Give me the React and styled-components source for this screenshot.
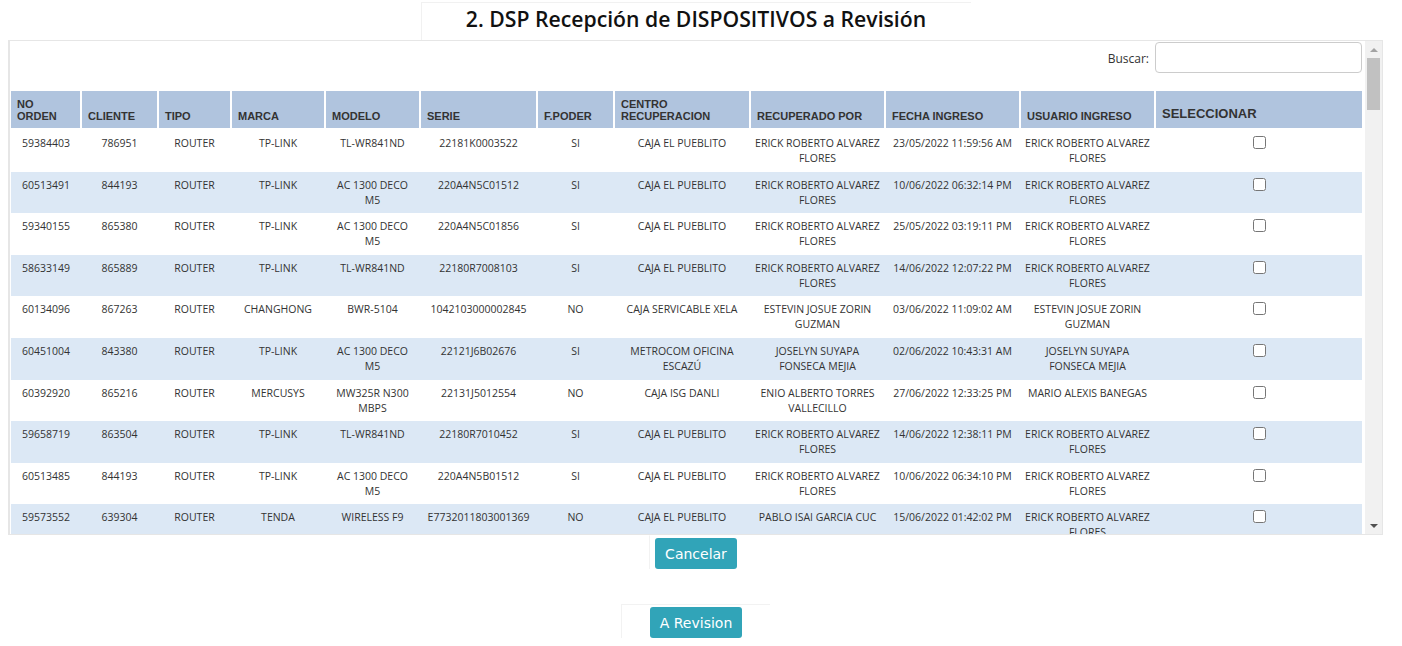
import React from 'react';
import styled, { createGlobalStyle } from 'styled-components';

const GlobalStyle = createGlobalStyle`
  html, body {
    margin: 0;
    padding: 0;
    background: #fff;
  }
  body {
    font-family: "Open Sans", "Liberation Sans", sans-serif;
    color: #333;
  }
`;

const Page = styled.div`
  padding: 0 19px 0 8px;
`;

const TitleBox = styled.div`
  width: 550px;
  height: 38px;
  margin: 2px auto 0;
  padding-bottom: 5px;
  border-top: 1px solid #f1f1f1;
  border-left: 1px solid #f1f1f1;
  box-sizing: border-box;
  display: flex;
  align-items: center;
  justify-content: center;
`;

const Title = styled.h2`
  margin: 0;
  font-size: 21.2px;
  line-height: 28px;
  font-weight: 600;
  color: #111;
`;

const Panel = styled.div`
  display: flex;
  height: 493px;
  border: 1px solid #e6e6e6;
  border-left-width: 2px;
  background: #fff;
`;

const Scroller = styled.div`
  flex: 1;
  overflow: hidden;
  padding: 0 3px 0 1px;
`;

const ScrollTrack = styled.div`
  width: 17px;
  flex: none;
  background: #f1f1f1;
  display: flex;
  flex-direction: column;
  align-items: center;
`;

const ScrollArrow = styled.div`
  height: 17px;
  width: 17px;
  display: flex;
  align-items: center;
  justify-content: center;

  &::before {
    content: '';
    width: 0;
    height: 0;
    border-left: 4px solid transparent;
    border-right: 4px solid transparent;
    ${(p) =>
      p.$down
        ? 'border-top: 4px solid #505050;'
        : 'border-bottom: 4px solid #a3a3a3;'}
  }
`;

const ScrollThumb = styled.div`
  width: 13px;
  height: 52px;
  background: #c1c1c1;
`;

const ScrollSpace = styled.div`
  flex: 1;
`;

const SearchBar = styled.div`
  display: flex;
  justify-content: flex-end;
  align-items: flex-start;
  gap: 6px;
  padding-top: 1px;
  height: 49px;
`;

const SearchLabel = styled.label`
  font-size: 12px;
  line-height: 33px;
  color: #333;
`;

const SearchInput = styled.input`
  width: 207px;
  height: 31px;
  box-sizing: border-box;
  border: 1px solid #ccc;
  border-radius: 4px;
  padding: 4px 8px;
  font-size: 12px;
  outline: none;
`;

const Table = styled.table`
  width: 1351px;
  table-layout: fixed;
  border-collapse: collapse;
  border-spacing: 0;
`;

const Th = styled.th`
  background: #b0c4de;
  font-family: "Liberation Sans", Arial, sans-serif;
  font-size: ${(p) => (p.$big ? '13px' : '11px')};
  line-height: ${(p) => (p.$big ? '14px' : '12px')};
  font-weight: bold;
  color: #333;
  text-align: left;
  vertical-align: bottom;
  white-space: pre-line;
  padding: 7px 5px ${(p) => (p.$big ? '7px' : '6px')} 6px;
  height: 37px;
  box-sizing: border-box;
  border-right: ${(p) => (p.$last ? '0' : '2px solid #fff')};
  border-bottom: 2px solid #fff;
`;

const Tr = styled.tr`
  background: ${(p) => (p.$alt ? '#dce8f5' : '#fff')};
`;

const Td = styled.td`
  font-size: 10.5px;
  line-height: 15px;
  color: #333;
  text-align: center;
  vertical-align: top;
  padding: 6px 3px 5.6px;
  white-space: pre-line;
`;

const Check = styled.input`
  width: 13px;
  height: 13px;
  margin: 0 0 0 1px;
  vertical-align: top;
`;

const Actions = styled.div`
  display: flex;
  flex-direction: column;
  align-items: center;
`;

const ButtonCell = styled.div`
  width: ${(p) => p.$w}px;
  margin-top: ${(p) => p.$mt}px;
  padding-top: 2px;
  display: flex;
  justify-content: center;
  border-left: 1px solid #f2f2f2;
  border-top: 1px solid ${(p) => (p.$top ? '#f2f2f2' : 'transparent')};
  box-sizing: border-box;
`;

const Button = styled.button`
  background: #31a4b8;
  color: #fff;
  border: none;
  border-radius: 3px;
  height: 31px;
  padding: 0 10px;
  font-family: "DejaVu Sans", Verdana, sans-serif;
  font-size: 14px;
  cursor: pointer;
`;

const columns = [
  { label: 'NO\nORDEN', w: 70 },
  { label: 'CLIENTE', w: 77 },
  { label: 'TIPO', w: 73 },
  { label: 'MARCA', w: 94 },
  { label: 'MODELO', w: 95 },
  { label: 'SERIE', w: 117 },
  { label: 'F.PODER', w: 77 },
  { label: 'CENTRO\nRECUPERACION', w: 136 },
  { label: 'RECUPERADO POR', w: 135 },
  { label: 'FECHA INGRESO', w: 135 },
  { label: 'USUARIO INGRESO', w: 135 },
  { label: 'SELECCIONAR', w: 207 },
];

const ERICK = 'ERICK ROBERTO ALVAREZ\nFLORES';

const rows = [
  ['59384403', '786951', 'ROUTER', 'TP-LINK', 'TL-WR841ND', '22181K0003522', 'SI', 'CAJA EL PUEBLITO', ERICK, '23/05/2022 11:59:56 AM', ERICK],
  ['60513491', '844193', 'ROUTER', 'TP-LINK', 'AC 1300 DECO\nM5', '220A4N5C01512', 'SI', 'CAJA EL PUEBLITO', ERICK, '10/06/2022 06:32:14 PM', ERICK],
  ['59340155', '865380', 'ROUTER', 'TP-LINK', 'AC 1300 DECO\nM5', '220A4N5C01856', 'SI', 'CAJA EL PUEBLITO', ERICK, '25/05/2022 03:19:11 PM', ERICK],
  ['58633149', '865889', 'ROUTER', 'TP-LINK', 'TL-WR841ND', '22180R7008103', 'SI', 'CAJA EL PUEBLITO', ERICK, '14/06/2022 12:07:22 PM', ERICK],
  ['60134096', '867263', 'ROUTER', 'CHANGHONG', 'BWR-5104', '1042103000002845', 'NO', 'CAJA SERVICABLE XELA', 'ESTEVIN JOSUE ZORIN\nGUZMAN', '03/06/2022 11:09:02 AM', 'ESTEVIN JOSUE ZORIN\nGUZMAN'],
  ['60451004', '843380', 'ROUTER', 'TP-LINK', 'AC 1300 DECO\nM5', '22121J6B02676', 'SI', 'METROCOM OFICINA\nESCAZÚ', 'JOSELYN SUYAPA\nFONSECA MEJIA', '02/06/2022 10:43:31 AM', 'JOSELYN SUYAPA\nFONSECA MEJIA'],
  ['60392920', '865216', 'ROUTER', 'MERCUSYS', 'MW325R N300\nMBPS', '22131J5012554', 'NO', 'CAJA ISG DANLI', 'ENIO ALBERTO TORRES\nVALLECILLO', '27/06/2022 12:33:25 PM', 'MARIO ALEXIS BANEGAS'],
  ['59658719', '863504', 'ROUTER', 'TP-LINK', 'TL-WR841ND', '22180R7010452', 'SI', 'CAJA EL PUEBLITO', ERICK, '14/06/2022 12:38:11 PM', ERICK],
  ['60513485', '844193', 'ROUTER', 'TP-LINK', 'AC 1300 DECO\nM5', '220A4N5B01512', 'SI', 'CAJA EL PUEBLITO', ERICK, '10/06/2022 06:34:10 PM', ERICK],
  ['59573552', '639304', 'ROUTER', 'TENDA', 'WIRELESS F9', 'E7732011803001369', 'NO', 'CAJA EL PUEBLITO', 'PABLO ISAI GARCIA CUC', '15/06/2022 01:42:02 PM', ERICK],
];

const App = () => {
  return (
    <Page>
      <GlobalStyle />
      <TitleBox>
        <Title>2. DSP Recepción de DISPOSITIVOS a Revisión</Title>
      </TitleBox>

      <Panel>
        <Scroller>
          <SearchBar>
            <SearchLabel>Buscar:</SearchLabel>
            <SearchInput type="search" />
          </SearchBar>

          <Table>
            <colgroup>
              {columns.map((c) => (
                <col key={c.label} style={{ width: c.w }} />
              ))}
            </colgroup>
            <thead>
              <tr>
                {columns.map((c, i) => (
                  <Th
                    key={c.label}
                    $big={c.label === 'SELECCIONAR'}
                    $last={i === columns.length - 1}
                  >
                    {c.label}
                  </Th>
                ))}
              </tr>
            </thead>
            <tbody>
              {rows.map((r, i) => (
                <Tr key={i} $alt={i % 2 === 1}>
                  {r.map((cell, j) => (
                    <Td key={j}>{cell}</Td>
                  ))}
                  <Td>
                    <Check type="checkbox" />
                  </Td>
                </Tr>
              ))}
            </tbody>
          </Table>
        </Scroller>

        <ScrollTrack>
          <ScrollArrow />
          <ScrollThumb />
          <ScrollSpace />
          <ScrollArrow $down />
        </ScrollTrack>
      </Panel>

      <Actions>
        <ButtonCell $w={94} $mt={0}>
          <Button>Cancelar</Button>
        </ButtonCell>
        <ButtonCell $w={149} $mt={35} $top>
          <Button>A Revision</Button>
        </ButtonCell>
      </Actions>
    </Page>
  );
};

export default App;
